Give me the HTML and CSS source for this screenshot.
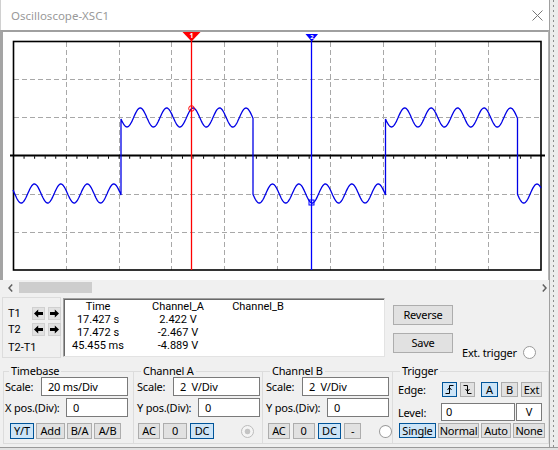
FILE: index.html
```html
<!DOCTYPE html>
<html>
<head>
    <title>Oscilloscope-XSC1</title>
    <link rel="stylesheet" href="styles.css">
</head>
<body>
<div class="screen">
  <div class="window">
    <div class="titlebar">
      <span class="title">Oscilloscope-XSC1</span>
      <svg class="close" width="11" height="11" viewBox="0 0 11 11"><path d="M0.5 0.5L10.5 10.5M10.5 0.5L0.5 10.5"/></svg>
    </div>

    <!-- screen of the scope, drawn in page coordinates -->
    <div class="scope">
      <svg class="plot" viewBox="3 32 545 248" width="545" height="248">
        <path class="grid" d="M66.5 42V270M119.5 42V270M171.5 42V270M224.5 42V270M277.5 42V270M330.5 42V270M383.5 42V270M435.5 42V270M488.5 42V270M14 79.5H541M14 117.5H541M14 194.5H541M14 232.5H541"/>
        <rect class="frame" x="13.5" y="41.5" width="527.5" height="228.5"/>
        <path class="axis" d="M10 155.5H545"/>
        <path class="ticks" d="M13 157.5H541"/>
        <polyline id="wave" class="wave" points=""/>
        <path class="cursor1" d="M191.5 33V270"/>
        <path class="cursor2" d="M311.5 34V270"/>
        <polygon class="flag1" points="182.5,32 200.5,32 191.5,41.5"/>
        <text class="flag-num" x="191.5" y="38.2">1</text>
        <polygon class="flag2" points="305.5,34 318,34 311.8,41.5"/>
        <text class="flag-num small" x="311.8" y="39">2</text>
        <circle class="mark1" cx="191.5" cy="108.5" r="2.8"/>
        <rect class="mark2" x="309" y="200" width="5" height="5"/>
      </svg>
    </div>

    <div class="hscroll">
      <svg class="chev" width="5" height="8" viewBox="0 0 5 8"><path d="M4.2 0.5L1 4L4.2 7.5"/></svg>
      <div class="thumb"></div>
      <svg class="chev right" width="5" height="8" viewBox="0 0 5 8"><path d="M0.8 0.5L4 4L0.8 7.5"/></svg>
    </div>

    <div class="readout-row">
      <div class="cursors">
        <span>T1</span>
        <button class="step"><svg width="9" height="9" viewBox="0 0 9 9"><path d="M0 4.5L4.2 0.5V3H9V6H4.2V8.5Z"/></svg></button>
        <button class="step"><svg width="9" height="9" viewBox="0 0 9 9"><path d="M9 4.5L4.8 0.5V3H0V6H4.8V8.5Z"/></svg></button>
        <span>T2</span>
        <button class="step"><svg width="9" height="9" viewBox="0 0 9 9"><path d="M0 4.5L4.2 0.5V3H9V6H4.2V8.5Z"/></svg></button>
        <button class="step"><svg width="9" height="9" viewBox="0 0 9 9"><path d="M9 4.5L4.8 0.5V3H0V6H4.8V8.5Z"/></svg></button>
        <span class="tdiff">T2-T1</span>
      </div>

      <div class="readout">
        <span>Time</span><span>Channel_A</span><span>Channel_B</span>
        <span>17.427 s</span><span>2.422 V</span><span></span>
        <span>17.472 s</span><span>-2.467 V</span><span></span>
        <span>45.455 ms</span><span>-4.889 V</span><span></span>
      </div>

      <div class="actions">
        <button>Reverse</button>
        <button>Save</button>
      </div>

      <div class="ext">
        <span>Ext. trigger</span>
        <span class="radio"></span>
      </div>
    </div>

    <div class="groups">
      <fieldset class="group timebase">
        <legend>Timebase</legend>
        <div class="row"><span class="lbl">Scale:</span><div class="field wide">20 ms/Div</div></div>
        <div class="row"><span class="lbl pos">X pos.(Div):</span><div class="field narrow">0</div></div>
        <div class="btns">
          <button class="on w24">Y/T</button>
          <button class="w29">Add</button>
          <button class="w25">B/A</button>
          <button class="w27">A/B</button>
        </div>
      </fieldset>

      <fieldset class="group chan-a">
        <legend>Channel A</legend>
        <div class="row"><span class="lbl">Scale:</span><div class="field wide">2  V/Div</div></div>
        <div class="row"><span class="lbl pos">Y pos.(Div):</span><div class="field narrow">0</div></div>
        <div class="btns">
          <button class="w22">AC</button>
          <button class="w24">0</button>
          <button class="on w24">DC</button>
          <span class="radio disabled"></span>
        </div>
      </fieldset>

      <fieldset class="group chan-b">
        <legend>Channel B</legend>
        <div class="row"><span class="lbl">Scale:</span><div class="field wide">2  V/Div</div></div>
        <div class="row"><span class="lbl pos">Y pos.(Div):</span><div class="field narrow">0</div></div>
        <div class="btns">
          <button class="w22">AC</button>
          <button class="w22">0</button>
          <button class="on w24">DC</button>
          <button class="w17">-</button>
          <span class="radio"></span>
        </div>
      </fieldset>

      <fieldset class="group trigger">
        <legend>Trigger</legend>
        <div class="trow edge-row">
          <span class="tlbl">Edge:</span>
          <button class="on icon"><svg width="9" height="11" viewBox="0 0 9 11"><path d="M0.5 9.5H4.5V1.5H8.5M2.5 6L4.5 3.5L6.5 6"/></svg></button>
          <button class="icon"><svg width="9" height="11" viewBox="0 0 9 11"><path d="M0.5 1.5H4.5V9.5H8.5M2.5 5L4.5 7.5L6.5 5"/></svg></button>
          <button class="on w17 src">A</button>
          <button class="w17">B</button>
          <button class="w21">Ext</button>
        </div>
        <div class="trow level-row">
          <span class="tlbl">Level:</span>
          <div class="field level">0</div>
          <div class="field unit">V</div>
        </div>
        <div class="trow mode-row">
          <button class="on w37">Single</button>
          <button class="w41">Normal</button>
          <button class="w30">Auto</button>
          <button class="w32">None</button>
        </div>
      </fieldset>
    </div>
  </div>
  <div class="edge"></div>
</div>

<script>
    // Square wave (+-1 div) with a ripple ten times faster on top of it.
    // Everything is in page pixels, since the plot viewBox uses them.
    var period = 264.5;
    var highTime = 132;
    var rising = 121;
    var ripplePeriod = 26.45;
    var rippleMin = 127;

    var pts = [];
    var prev = null;
    for (var x = 13; x <= 541; x += 0.5) {
        var p = ((x - rising) % period + period) % period;
        var mid = p < highTime ? 117.5 : 193.5;
        var ripple = 9.5 * Math.cos(2 * Math.PI * (x - rippleMin) / ripplePeriod);
        if (prev !== null && mid !== prev) {
            pts.push(x + ',' + (prev + ripple).toFixed(1));
        }
        pts.push(x + ',' + (mid + ripple).toFixed(1));
        prev = mid;
    }
    document.getElementById('wave').setAttribute('points', pts.join(' '));
</script>
</body>
</html>
```

FILE: styles.css
```css
html, body {
  margin: 0;
}

body {
  width: 558px;
  height: 450px;
  overflow: hidden;
  background: #e2e2e2;
  font-family: "Noto Sans", "Open Sans", sans-serif;
  font-size: 11px;
  letter-spacing: -0.2px;
  color: #000;
}

.screen {
  display: flex;
  height: 447px;
  border-bottom: 1px solid #9a9a9a;
}

.window {
  width: 550px;
  box-sizing: border-box;
  background: #f0f0f0;
  border-right: 1px solid #a0a0a0;
}

.edge {
  flex: 1;
  background-color: #ececec;
  background-image: linear-gradient(#8c8c8c 40%, transparent 40%);
  background-size: 1px 5px;
  background-position: 3px 0;
  background-repeat: repeat-y;
}

/* title bar */

.titlebar {
  height: 30px;
  display: flex;
  align-items: center;
  justify-content: space-between;
  padding: 0 6px 0 10px;
  background: #fff;
  border-left: 1px solid #d0d0d0;
}

.title {
  font-size: 11.5px;
  letter-spacing: 0;
  color: #999;
}

.close path {
  stroke: #777;
  stroke-width: 1;
}

/* scope screen */

.scope {
  height: 250px;
  box-sizing: border-box;
  background: #fff;
  border-top: 2px solid #a0a0a0;
  border-left: 3px solid #a4a4a4;
  border-right: 1px solid #b4b4b4;
}

.plot {
  display: block;
}

.plot .grid {
  fill: none;
  stroke: #a8a8a8;
  stroke-width: 1;
  stroke-dasharray: 5 3;
}

.plot .frame {
  fill: none;
  stroke: #000;
  stroke-width: 1.6;
}

.plot .axis {
  stroke: #000;
  stroke-width: 2;
}

.plot .ticks {
  stroke: #000;
  stroke-width: 2.5;
  stroke-dasharray: 1 9.56;
}

.plot .wave {
  fill: none;
  stroke: #0000e6;
  stroke-width: 1.3;
}

.plot .cursor1 {
  stroke: #f00;
  stroke-width: 1.3;
}

.plot .cursor2 {
  stroke: #0000ff;
  stroke-width: 1.3;
}

.plot .flag1 {
  fill: #f00;
}

.plot .flag2 {
  fill: #0000ff;
}

.plot .flag-num {
  fill: #fff;
  font-size: 7px;
  font-weight: bold;
  text-anchor: middle;
}

.plot .flag-num.small {
  font-size: 6px;
}

.plot .mark1 {
  fill: none;
  stroke: #f00;
  stroke-width: 1;
}

.plot .mark2 {
  fill: none;
  stroke: #0000ff;
  stroke-width: 1;
}

/* scrollbar */

.hscroll {
  height: 15px;
  display: flex;
  align-items: center;
  padding-left: 8px;
}

.chev path {
  fill: none;
  stroke: #606060;
  stroke-width: 1.5;
}

.chev.right {
  margin-left: auto;
  margin-right: 2px;
}

.thumb {
  width: 73px;
  height: 11px;
  margin-left: 6px;
  background: #cdcdcd;
}

/* buttons and fields */

button {
  font: inherit;
  letter-spacing: inherit;
  color: #000;
  height: 16px;
  padding: 0;
  margin: 0;
  line-height: 14px;
  border: 1px solid #adadad;
  background: #e1e1e1;
  text-align: center;
}

button.on {
  background: #cce4f7;
  border-color: #005499;
}

.w17 { width: 17px; }
.w21 { width: 21px; }
.w22 { width: 22px; }
.w24 { width: 24px; }
.w25 { width: 25px; }
.w27 { width: 27px; }
.w29 { width: 29px; }
.w30 { width: 30px; }
.w32 { width: 32px; }
.w37 { width: 37px; }
.w41 { width: 41px; }

.field {
  height: 19px;
  box-sizing: border-box;
  border: 1px solid #7a7a7a;
  background: #fff;
  padding-left: 6px;
  line-height: 17px;
  white-space: pre;
}

.field.wide {
  width: 87px;
}

.field.narrow {
  width: 62px;
}

.radio {
  width: 13px;
  height: 13px;
  box-sizing: border-box;
  border: 1px solid #9a9a9a;
  border-radius: 50%;
  background: #fff;
}

.radio.disabled {
  border-color: #bcbcbc;
  background: radial-gradient(circle, #c4c4c4 0, #c4c4c4 2.5px, #f4f4f4 3.2px);
}

/* cursor readout */

.readout-row {
  display: flex;
  align-items: flex-start;
  height: 70px;
}

.cursors {
  margin: 2px 0 0 2px;
  width: 59px;
  height: 61px;
  box-sizing: border-box;
  border: 1px solid #dcdcdc;
  padding: 9px 0 0 5px;
  display: grid;
  grid-template-columns: 21px 13px 13px;
  grid-auto-rows: 13px;
  column-gap: 3px;
  row-gap: 3px;
  font-family: Roboto, "Noto Sans", sans-serif;
  letter-spacing: 0;
  line-height: 13px;
}

.step {
  width: 13px;
  height: 13px;
  display: flex;
  align-items: center;
  justify-content: center;
  border-color: #d0d0d0;
}

.step svg {
  display: block;
}

.tdiff {
  grid-column: 1 / 4;
  margin-top: 2px;
}

.readout {
  margin: 3px 0 0 2px;
  width: 322px;
  height: 59px;
  box-sizing: border-box;
  padding: 1px 0 0 1px;
  background: #fff;
  border: 1px solid;
  border-color: #a0a0a0 #e3e3e3 #e3e3e3 #a0a0a0;
  box-shadow: inset 1px 1px 0 #696969;
  display: grid;
  grid-template-columns: 66px 94px 66px;
  grid-auto-rows: 13px;
  font-family: Roboto, "Noto Sans", sans-serif;
  letter-spacing: 0;
  line-height: 13px;
  text-align: center;
}

.actions {
  margin: 10px 0 0 8px;
  display: flex;
  flex-direction: column;
  gap: 8px;
}

.actions button {
  width: 60px;
  height: 20px;
  line-height: 18px;
}

.ext {
  margin: 51px 0 0 9px;
  display: flex;
  align-items: center;
  gap: 6px;
  line-height: 13px;
}

/* control groups */

.groups {
  display: flex;
  margin-left: 3px;
}

.group {
  margin: 0;
  min-width: 0;
  box-sizing: border-box;
  padding: 0 0 4px 3px;
  border: 1px solid #dcdcdc;
  border-right: 0;
}

.group legend {
  padding: 0 2px;
  margin-left: 4px;
  line-height: 12px;
}

.timebase {
  width: 130px;
  padding-left: 1px;
}

.chan-a {
  width: 129px;
}

.chan-b {
  width: 130px;
}

.trigger {
  width: 157px;
  padding: 0 0 5px 5px;
  border-right: 1px solid #dcdcdc;
}

.trigger legend {
  margin-left: 2px;
}

.row {
  display: flex;
  align-items: center;
  height: 19px;
}

.row + .row {
  margin-top: 2px;
}

.lbl {
  width: 36px;
}

.lbl.pos {
  width: 61px;
}

.btns {
  display: flex;
  align-items: center;
  gap: 3px;
  margin-top: 6px;
  height: 16px;
}

.timebase .btns {
  gap: 2px;
  margin-left: 5px;
}

.chan-a .btns {
  margin-left: 1px;
}

.chan-a .radio {
  margin-left: 24px;
}

.chan-b .btns {
  margin-left: 2px;
}

.chan-b .radio {
  margin-left: 15px;
}

.trow {
  display: flex;
  align-items: center;
}

.trow button {
  height: 15px;
  line-height: 13px;
}

.tlbl {
  width: 44px;
}

.edge-row {
  margin-top: 5px;
  height: 15px;
  gap: 3px;
}

.edge-row .tlbl {
  margin-right: -3px;
}

.icon {
  width: 15px;
  display: flex;
  align-items: center;
  justify-content: center;
}

.icon svg {
  display: block;
}

.icon path {
  fill: none;
  stroke: #000;
  stroke-width: 1;
}

.edge-row .src {
  margin-left: 3px;
}

.level-row {
  margin-top: 6px;
  height: 18px;
}

.level-row .tlbl {
  width: 43px;
}

.level-row .field {
  height: 18px;
  line-height: 16px;
}

.field.level {
  width: 74px;
  padding-left: 4px;
}

.field.unit {
  width: 26px;
  margin-left: 1px;
  padding-left: 0;
  text-align: center;
}

.mode-row {
  margin: 2px 0 0 1px;
  height: 15px;
  gap: 2px;
}
```
